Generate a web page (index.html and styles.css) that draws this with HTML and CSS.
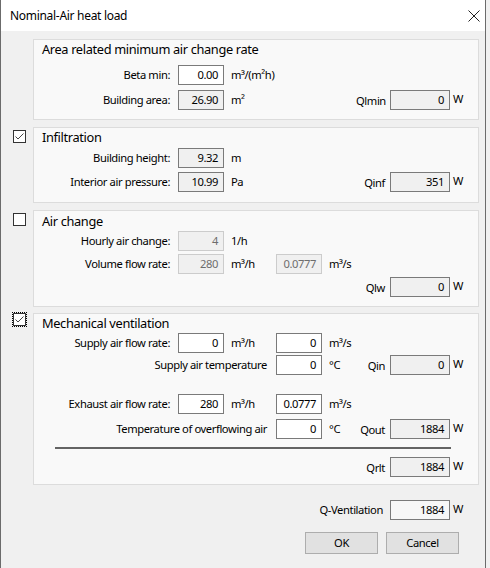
FILE: index.html
```html
<!DOCTYPE html>
<html>
<head>
<meta charset="utf-8">
<link rel="stylesheet" href="styles.css">
</head>
<body>
<div class="win">
  <div class="titlebar">
    <span class="title">Nominal-Air heat load</span>
    <svg class="close" viewBox="0 0 12 12" width="12" height="12"><path d="M0.5 0.5 L11.5 11.5 M11.5 0.5 L0.5 11.5" stroke="#222" stroke-width="1" fill="none"/></svg>
  </div>
  <div class="content">
    <div class="section s1">
      <div class="cbcol"></div>
      <div class="panel p1">
        <div class="ptitle">Area related minimum air change rate</div>
        <div class="row mt7">
          <span class="lbl">Beta min:</span><span class="box in1 edit">0.00</span><span class="u1">m³/(m²h)</span>
        </div>
        <div class="row mt5">
          <span class="lbl">Building area:</span><span class="box in1 ro">26.90</span><span class="u1">m²</span>
          <span class="ql">Qlmin</span><span class="box qbox ro">0</span><span class="w">W</span>
        </div>
      </div>
    </div>

    <div class="section s2">
      <div class="cbcol"><span class="cb"><svg viewBox="0 0 11 11" width="11" height="11"><path d="M1.5 5.5 L4 8 L9.5 2.5" stroke="#444" stroke-width="1" fill="none"/></svg></span></div>
      <div class="panel p2">
        <div class="ptitle">Infiltration</div>
        <div class="row mt2">
          <span class="lbl">Building height:</span><span class="box in1 ro">9.32</span><span class="u1">m</span>
        </div>
        <div class="row mt4">
          <span class="lbl">Interior air pressure:</span><span class="box in1 ro">10.99</span><span class="u1">Pa</span>
          <span class="ql">Qinf</span><span class="box qbox ro">351</span><span class="w">W</span>
        </div>
      </div>
    </div>

    <div class="section s3">
      <div class="cbcol"><span class="cb"></span></div>
      <div class="panel p3">
        <div class="ptitle">Air change</div>
        <div class="row mt1">
          <span class="lbl">Hourly air change:</span><span class="box in1 dis">4</span><span class="u1">1/h</span>
        </div>
        <div class="row mt3">
          <span class="lbl">Volume flow rate:</span><span class="box in1 dis">280</span><span class="u1">m³/h</span>
          <span class="box in2 dis">0.0777</span><span class="u2">m³/s</span>
        </div>
        <div class="row mt3">
          <span class="ql">Qlw</span><span class="box qbox ro">0</span><span class="w">W</span>
        </div>
      </div>
    </div>

    <div class="section s4">
      <div class="cbcol"><span class="cb focus"><svg viewBox="0 0 11 11" width="11" height="11"><path d="M1.5 5.5 L4 8 L9.5 2.5" stroke="#444" stroke-width="1" fill="none"/></svg></span></div>
      <div class="panel p4">
        <div class="ptitle">Mechanical ventilation</div>
        <div class="row mt1">
          <span class="lbl">Supply air flow rate:</span><span class="box in1 edit">0</span><span class="u1">m³/h</span>
          <span class="box in2 edit">0</span><span class="u2">m³/s</span>
        </div>
        <div class="row mt2">
          <span class="lbl wide">Supply air temperature</span>
          <span class="box in2 edit">0</span><span class="u2">°C</span>
          <span class="ql">Qin</span><span class="box qbox ro">0</span><span class="w">W</span>
        </div>
        <div class="row mt19">
          <span class="lbl">Exhaust air flow rate:</span><span class="box in1 edit">280</span><span class="u1">m³/h</span>
          <span class="box in2 edit">0.0777</span><span class="u2">m³/s</span>
        </div>
        <div class="row mt5">
          <span class="lbl wide">Temperature of overflowing air</span>
          <span class="box in2 edit">0</span><span class="u2">°C</span>
          <span class="ql">Qout</span><span class="box qbox ro">1884</span><span class="w">W</span>
        </div>
        <div class="sep"></div>
        <div class="row mt8">
          <span class="ql">Qrlt</span><span class="box qbox ro">1884</span><span class="w">W</span>
        </div>
      </div>
    </div>

    <div class="row total">
      <span class="lbl totlbl">Q-Ventilation</span><span class="box qbox light">1884</span><span class="w">W</span>
    </div>

    <div class="buttons">
      <span class="btn">OK</span>
      <span class="btn">Cancel</span>
    </div>
  </div>
</div>
</body>
</html>
```

FILE: styles.css
```css
* { box-sizing: border-box; }

body {
  margin: 0;
  background: #f0f0f0;
  font-family: "Noto Sans", "DejaVu Sans", sans-serif;
  font-size: 11.2px;
  letter-spacing: -0.4px;
  color: #000;
}

.win {
  width: 486px;
  height: 568px;
  background: #f0f0f0;
  border-left: 1px solid #6b6b6b;
  border-right: 1px solid #6b6b6b;
}

.titlebar {
  height: 31px;
  background: #fff;
  display: flex;
  align-items: center;
  justify-content: space-between;
  padding: 0 5px 0 9px;
}

.title {
  font-size: 12px;
  letter-spacing: -0.3px;
}

.close {
  display: block;
  margin-top: 1px;
}

.content {
  padding-top: 8px;
}

.section {
  display: flex;
}

.s2, .s3 { margin-top: 7px; }
.s4 { margin-top: 6px; }

.cbcol {
  width: 32px;
  padding-left: 12px;
  padding-top: 3px;
}

.s4 .cbcol { padding-top: 0; }

.cb {
  display: block;
  width: 13px;
  height: 13px;
  border: 1px solid #333;
  background: #fff;
}

.cb svg { display: block; }

.cb.focus {
  outline: 1px dotted #000;
  outline-offset: 0;
}

.panel {
  width: 446px;
  border: 1px solid #dcdcdc;
  background: #f9f9f9;
}

.p1 { padding-bottom: 9px; }
.p2 { padding-bottom: 10px; }
.p3 { padding-bottom: 9px; }
.p4 { padding-bottom: 7px; }

.ptitle {
  height: 18px;
  line-height: 18px;
  padding-left: 8px;
  font-size: 12.8px;
  letter-spacing: -0.35px;
}

.p3 .ptitle { margin-top: 1px; }

.row {
  display: grid;
  grid-template-columns: 144px 46px 52px 46px 34px 34px 60px 1fr;
  height: 20px;
  align-items: center;
  white-space: nowrap;
}

.mt1 { margin-top: 1px; }
.mt2 { margin-top: 2px; }
.mt3 { margin-top: 3px; }
.mt4 { margin-top: 4px; }
.mt5 { margin-top: 5px; }
.mt7 { margin-top: 7px; }
.mt8 { margin-top: 8px; }
.mt19 { margin-top: 19px; }

.lbl {
  grid-column: 1;
  text-align: right;
  padding-right: 8px;
  padding-bottom: 2px;
}

.lbl.wide {
  grid-column: 1 / 4;
  padding-right: 9px;
}

.box {
  height: 20px;
  border: 1px solid #7a7a7a;
  text-align: right;
  padding-right: 5px;
  line-height: 18px;
}

.in1 { grid-column: 2; }
.in2 { grid-column: 4; }
.qbox { grid-column: 7; }

.edit { background: #fff; }
.ro { background: #f0f0f0; }
.dis { background: #f0f0f0; border-color: #cccccc; color: #6d6d6d; }
.light { background: #f7f7f7; }

.u1 {
  grid-column: 3;
  padding-left: 7px;
  padding-bottom: 2px;
}

.u2 {
  grid-column: 5;
  padding-left: 7px;
  padding-bottom: 2px;
  overflow: visible;
}

.ql {
  grid-column: 6;
  text-align: right;
  padding-right: 5px;
}

.w {
  grid-column: 8;
  padding-left: 3px;
  padding-bottom: 4px;
}

.sep {
  margin-top: 8px;
  margin-left: 21px;
  width: 396px;
  height: 2px;
  background: #646464;
}

.total {
  margin-top: 15px;
  margin-left: 33px;
}

.totlbl {
  grid-column: 1 / 7;
  padding-right: 7px;
}

.buttons {
  display: flex;
  gap: 8px;
  margin-top: 12px;
  padding-left: 304px;
}

.btn {
  width: 73px;
  height: 22px;
  border: 1px solid #adadad;
  background: #e1e1e1;
  text-align: center;
  line-height: 20px;
}
```
